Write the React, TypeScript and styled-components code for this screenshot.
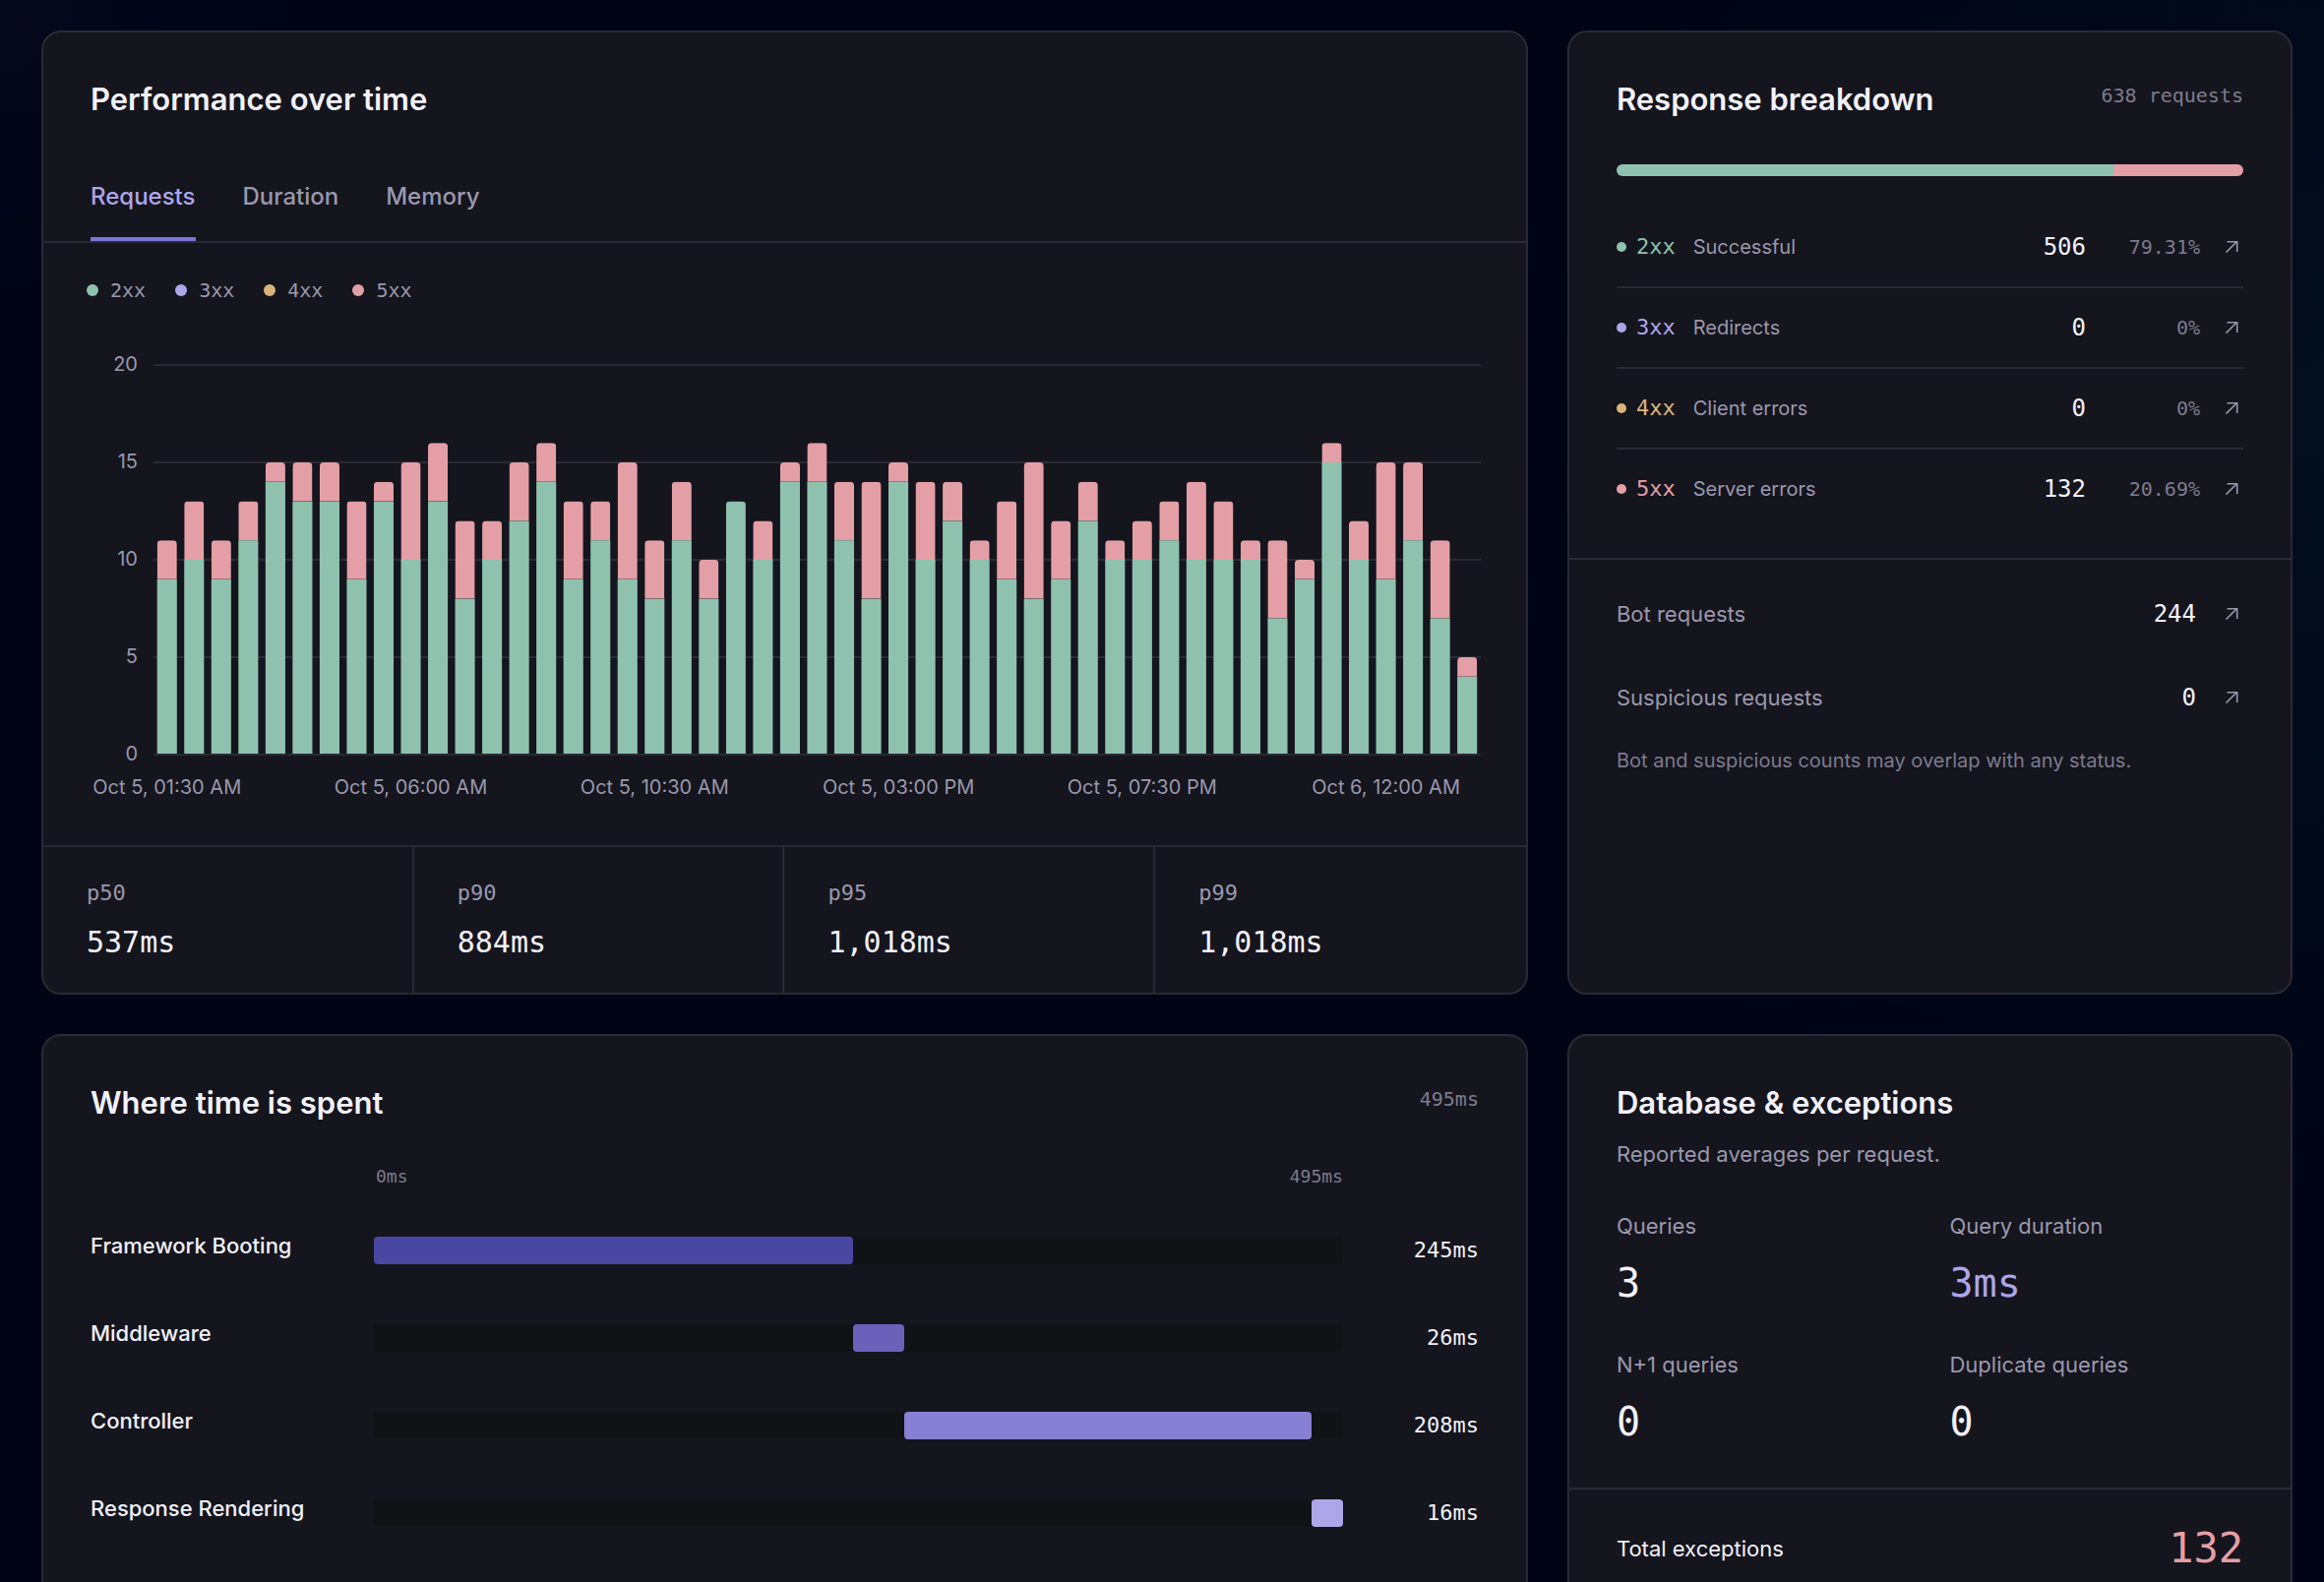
import React, { useState } from "react";
import styled, { createGlobalStyle } from "styled-components";

const color = {
  page: "#000414",
  card: "#15151d",
  line: "#2a2a36",
  track: "#111216",
  text: "#f2f1fb",
  muted: "#9a98ae",
  dim: "#7d7b8f",
  green: "#8fc2ae",
  violet: "#aea6e9",
  amber: "#d9b57c",
  pink: "#e49fa6",
  accent: "#7a75d8",
};

const sans = `Inter, "Liberation Sans", sans-serif`;
const mono = `"DejaVu Sans Mono", "Liberation Mono", monospace`;

const GlobalStyle = createGlobalStyle`
  *, *::before, *::after { box-sizing: border-box; }
  html { background: ${color.page}; }
  body { margin: 0; font-family: ${sans}; color: ${color.text}; -webkit-font-smoothing: antialiased; }
  h2, p, ul, dl, dd { margin: 0; padding: 0; }
  ul { list-style: none; }
`;

const Page = styled.main`
  height: 100vh;
  overflow-y: auto;
  scrollbar-width: none;
  padding: 31px 32px 40px 42px;
  background:
    radial-gradient(circle at 100% 26%, rgba(8, 34, 48, 0.35), transparent 32%),
    radial-gradient(circle at 0 0, rgba(14, 12, 38, 0.4), transparent 12%),
    ${color.page};
`;

const Grid = styled.div`
  display: grid;
  grid-template-columns: minmax(0, 2.05fr) minmax(0, 1fr);
  gap: 40px;
`;

const Card = styled.section`
  display: flex;
  flex-direction: column;
  border: 2px solid ${color.line};
  border-radius: 20px;
  background: ${color.card};
  overflow: hidden;
`;

const CardBody = styled.div<{ $bottom?: number }>`
  padding: 48px 48px ${(p) => p.$bottom ?? 0}px;
`;

const CardHead = styled.header`
  display: flex;
  justify-content: space-between;
  align-items: flex-start;
`;

const Title = styled.h2`
  font-size: 31px;
  line-height: 40px;
  font-weight: 600;
`;

const HeadNote = styled.span`
  font: 20px/32px ${mono};
  color: ${color.dim};
`;

/* Tabs */

const Tabs = styled.div`
  display: flex;
  gap: 48px;
  padding: 60px 48px 0;
  border-bottom: 2px solid ${color.line};
`;

const Tab = styled.button<{ $active: boolean }>`
  padding: 0 0 22px;
  border: 0;
  border-bottom: 4px solid ${(p) => (p.$active ? color.accent : "transparent")};
  background: none;
  font: 500 24px/38px ${sans};
  color: ${(p) => (p.$active ? color.violet : color.muted)};
  cursor: pointer;
`;

/* Chart */

const Dot = styled.span<{ $tone: string; $size: number }>`
  flex: none;
  width: ${(p) => p.$size}px;
  height: ${(p) => p.$size}px;
  border-radius: 50%;
  background: ${(p) => p.$tone};
`;

const Legend = styled.ul`
  display: flex;
  gap: 30px;
  padding: 32px 44px 0;
`;

const LegendItem = styled.li`
  display: flex;
  align-items: center;
  gap: 12px;
  font: 20px/32px ${mono};
  color: ${color.muted};
`;

const ChartArea = styled.div`
  padding: 40px 46px 32px 112px;
`;

const ChartSvg = styled.svg`
  display: block;
  width: 100%;
  height: 476px;
  overflow: visible;
`;

const AxisText = styled.text`
  font: 20px ${sans};
  fill: ${color.muted};
`;

const BarTop = styled.rect`
  clip-path: inset(0 round 4px 4px 0 0) fill-box;
`;

// [2xx, 5xx] for every half hour
const buckets: [number, number][] = [
  [9, 2], [10, 3], [9, 2], [11, 2], [14, 1], [13, 2], [13, 2], [9, 4], [13, 1], [10, 5],
  [13, 3], [8, 4], [10, 2], [12, 3], [14, 2], [9, 4], [11, 2], [9, 6], [8, 3], [11, 3],
  [8, 2], [13, 0], [10, 2], [14, 1], [14, 2], [11, 3], [8, 6], [14, 1], [10, 4], [12, 2],
  [10, 1], [9, 4], [8, 7], [9, 3], [12, 2], [10, 1], [10, 2], [11, 2], [10, 4], [10, 3],
  [10, 1], [7, 4], [9, 1], [15, 1], [10, 2], [9, 6], [11, 4], [7, 4], [4, 1],
];

const ticks = [
  "Oct 5, 01:30 AM",
  "Oct 5, 06:00 AM",
  "Oct 5, 10:30 AM",
  "Oct 5, 03:00 PM",
  "Oct 5, 07:30 PM",
  "Oct 6, 12:00 AM",
];

const TICK_STEP = 9;
const BASE = 416;
const yOf = (v: number) => BASE - (v * 396) / 20;
const slot = 100 / buckets.length;
const barWidth = slot * 0.73;
const pct = (n: number) => `${n}%`;

function RequestsChart() {
  return (
    <ChartSvg role="img" aria-label="Requests by status over time">
      {[5, 10, 15, 20].map((v) => (
        <rect key={v} x="0" width="100%" y={yOf(v) - 1} height="2" fill={color.line} />
      ))}
      {buckets.map(([ok, failed], i) => {
        const x = pct(i * slot + (slot - barWidth) / 2);
        const w = pct(barWidth);
        const Ok = failed ? "rect" : BarTop;
        return (
          <g key={i}>
            <Ok x={x} width={w} y={yOf(ok)} height={BASE - yOf(ok)} fill={color.green} />
            {failed > 0 && (
              <BarTop x={x} width={w} y={yOf(ok + failed)} height={yOf(ok) - yOf(ok + failed)} fill={color.pink} />
            )}
          </g>
        );
      })}
      <rect x="0" width="100%" y={BASE - 1} height="2" fill={color.line} />
      {[0, 5, 10, 15, 20].map((v) => (
        <AxisText key={v} x="-16" y={yOf(v) + 6} textAnchor="end">{v}</AxisText>
      ))}
      {ticks.map((t, i) => (
        <AxisText key={t} x={pct((i * TICK_STEP + 0.5) * slot)} y={BASE + 40} textAnchor="middle">{t}</AxisText>
      ))}
    </ChartSvg>
  );
}

/* Percentiles */

const Percentiles = styled.dl`
  display: grid;
  grid-template-columns: repeat(4, 1fr);
  border-top: 2px solid ${color.line};
`;

const Percentile = styled.div`
  display: grid;
  gap: 14px;
  padding: 31px 44px;
  border-right: 2px solid ${color.line};
  &:last-child { border-right: 0; }
  dt { font: 22px/32px ${mono}; color: ${color.muted}; }
  dd { font: 30px/40px ${mono}; }
`;

/* Response breakdown */

const Split = styled.div`
  display: flex;
  height: 12px;
  margin: 46px 0 32px;
  border-radius: 6px;
  overflow: hidden;
`;

const SplitPart = styled.span<{ $tone: string }>`
  background: ${(p) => p.$tone};
`;

const StatusItem = styled.li`
  border-bottom: 2px solid ${color.line};
  &:last-child { border-bottom: 0; }
`;

const StatusLink = styled.a`
  display: grid;
  grid-template-columns: auto 1fr auto 116px 44px;
  align-items: center;
  height: 80px;
  color: inherit;
  text-decoration: none;
`;

const StatusCode = styled.span<{ $tone: string }>`
  display: flex;
  align-items: center;
  gap: 10px;
  font: 22px/32px ${mono};
  color: ${(p) => p.$tone};
`;

const StatusName = styled.span`
  padding-left: 18px;
  font-size: 20px;
  line-height: 32px;
  color: ${color.muted};
`;

const Count = styled.span`
  font: 24px/32px ${mono};
  text-align: right;
`;

const Share = styled.span`
  font: 20px/32px ${mono};
  color: ${color.dim};
  text-align: right;
`;

const Arrow = styled.svg`
  display: block;
  justify-self: end;
  width: 24px;
  height: 24px;
  fill: none;
  stroke: ${color.muted};
`;

const ArrowIcon = () => (
  <Arrow viewBox="0 0 24 24" aria-hidden="true">
    <path d="M6.5 17.5 17.5 6.5M7.5 6.8h10.2v10.2" strokeWidth="1.6" />
  </Arrow>
);

const Extra = styled.div`
  padding: 12px 48px;
  border-top: 2px solid ${color.line};
`;

const ExtraLink = styled.a`
  display: grid;
  grid-template-columns: 1fr auto 24px;
  align-items: center;
  column-gap: 24px;
  height: 85px;
  color: inherit;
  text-decoration: none;
`;

const Label = styled.span`
  font-size: 22px;
  line-height: 32px;
  color: ${color.muted};
`;

const FootNote = styled.p`
  padding-top: 6px;
  font-size: 20px;
  line-height: 32px;
  color: ${color.dim};
`;

/* Time spent */

const TimeRow = styled.div`
  display: grid;
  grid-template-columns: 260px minmax(0, 1fr) 110px;
  column-gap: 28px;
  align-items: center;
`;

const Scale = styled.div`
  grid-column: 2;
  display: flex;
  justify-content: space-between;
  padding: 43px 0 0 2px;
  font: 18px/24px ${mono};
  color: ${color.dim};
`;

const Phases = styled.ul`
  display: grid;
  gap: 43px;
  padding-top: 40px;
`;

const PhaseRow = styled(TimeRow).attrs({ as: "li" })`
  height: 46px;
`;

const PhaseName = styled.span`
  align-self: start;
  font-size: 22px;
  line-height: 36px;
  font-weight: 500;
`;

const Track = styled.div`
  height: 28px;
  border-radius: 4px;
  background: ${color.track};
`;

const Fill = styled.div<{ $tone: string }>`
  height: 100%;
  border-radius: 4px;
  background: ${(p) => p.$tone};
`;

const PhaseTime = styled.span`
  font: 22px/32px ${mono};
  text-align: right;
`;

/* Database */

const Subtitle = styled.p`
  padding-top: 16px;
  font-size: 22px;
  line-height: 32px;
  color: ${color.muted};
`;

const Stats = styled.dl`
  display: grid;
  grid-template-columns: repeat(2, minmax(0, 1fr));
  gap: 41px 40px;
  padding-top: 41px;
`;

const Stat = styled.div<{ $tone?: string }>`
  display: grid;
  gap: 16px;
  dt { font-size: 22px; line-height: 32px; color: ${color.muted}; }
  dd { font: 40px/52px ${mono}; color: ${(p) => p.$tone ?? color.text}; }
`;

const Total = styled.div`
  display: flex;
  justify-content: space-between;
  align-items: center;
  padding: 32px 48px;
  border-top: 2px solid ${color.line};
  font-size: 22px;
  line-height: 56px;
`;

const TotalValue = styled.span`
  font: 42px/56px ${mono};
  color: ${color.pink};
`;

const statuses = [
  { code: "2xx", name: "Successful", count: 506, share: 79.31, tone: color.green },
  { code: "3xx", name: "Redirects", count: 0, share: 0, tone: color.violet },
  { code: "4xx", name: "Client errors", count: 0, share: 0, tone: color.amber },
  { code: "5xx", name: "Server errors", count: 132, share: 20.69, tone: color.pink },
];

const percentiles = [
  ["p50", "537ms"],
  ["p90", "884ms"],
  ["p95", "1,018ms"],
  ["p99", "1,018ms"],
];

const totalTime = 495;
const phases = [
  { name: "Framework Booting", start: 0, time: 245, tone: "#4947a1" },
  { name: "Middleware", start: 245, time: 26, tone: "#6c60bb" },
  { name: "Controller", start: 271, time: 208, tone: "#8880d4" },
  { name: "Response Rendering", start: 479, time: 16, tone: "#aea6e9" },
];

const stats = [
  { name: "Queries", value: "3" },
  { name: "Query duration", value: "3ms", tone: color.violet },
  { name: "N+1 queries", value: "0" },
  { name: "Duplicate queries", value: "0" },
];

export default function App() {
  const [tab, setTab] = useState("Requests");

  return (
    <Page>
      <GlobalStyle />
      <Grid>
        <Card>
          <CardBody>
            <Title>Performance over time</Title>
          </CardBody>
          <Tabs role="tablist">
            {["Requests", "Duration", "Memory"].map((t) => (
              <Tab key={t} role="tab" aria-selected={t === tab} $active={t === tab} onClick={() => setTab(t)}>
                {t}
              </Tab>
            ))}
          </Tabs>
          <Legend>
            {statuses.map((s) => (
              <LegendItem key={s.code}>
                <Dot $tone={s.tone} $size={12} />
                {s.code}
              </LegendItem>
            ))}
          </Legend>
          <ChartArea>
            <RequestsChart />
          </ChartArea>
          <Percentiles>
            {percentiles.map(([name, value]) => (
              <Percentile key={name}>
                <dt>{name}</dt>
                <dd>{value}</dd>
              </Percentile>
            ))}
          </Percentiles>
        </Card>

        <Card>
          <CardBody $bottom={30}>
            <CardHead>
              <Title>Response breakdown</Title>
              <HeadNote>638 requests</HeadNote>
            </CardHead>
            <Split>
              {statuses.map((s) => (
                <SplitPart key={s.code} $tone={s.tone} style={{ width: pct(s.share) }} />
              ))}
            </Split>
            <ul>
              {statuses.map((s) => (
                <StatusItem key={s.code}>
                  <StatusLink href={`#status-${s.code}`}>
                    <StatusCode $tone={s.tone}>
                      <Dot $tone={s.tone} $size={10} />
                      {s.code}
                    </StatusCode>
                    <StatusName>{s.name}</StatusName>
                    <Count>{s.count}</Count>
                    <Share>{pct(s.share)}</Share>
                    <ArrowIcon />
                  </StatusLink>
                </StatusItem>
              ))}
            </ul>
          </CardBody>
          <Extra>
            <ExtraLink href="#bots">
              <Label>Bot requests</Label>
              <Count>244</Count>
              <ArrowIcon />
            </ExtraLink>
            <ExtraLink href="#suspicious">
              <Label>Suspicious requests</Label>
              <Count>0</Count>
              <ArrowIcon />
            </ExtraLink>
            <FootNote>Bot and suspicious counts may overlap with any status.</FootNote>
          </Extra>
        </Card>

        <Card>
          <CardBody $bottom={48}>
            <CardHead>
              <Title>Where time is spent</Title>
              <HeadNote>495ms</HeadNote>
            </CardHead>
            <TimeRow>
              <Scale>
                <span>0ms</span>
                <span>495ms</span>
              </Scale>
            </TimeRow>
            <Phases>
              {phases.map((p) => (
                <PhaseRow key={p.name}>
                  <PhaseName>{p.name}</PhaseName>
                  <Track>
                    <Fill
                      $tone={p.tone}
                      style={{ marginLeft: pct((p.start / totalTime) * 100), width: pct((p.time / totalTime) * 100) }}
                    />
                  </Track>
                  <PhaseTime>{p.time}ms</PhaseTime>
                </PhaseRow>
              ))}
            </Phases>
          </CardBody>
        </Card>

        <Card>
          <CardBody $bottom={41}>
            <Title>Database &amp; exceptions</Title>
            <Subtitle>Reported averages per request.</Subtitle>
            <Stats>
              {stats.map((s) => (
                <Stat key={s.name} $tone={s.tone}>
                  <dt>{s.name}</dt>
                  <dd>{s.value}</dd>
                </Stat>
              ))}
            </Stats>
          </CardBody>
          <Total>
            <span>Total exceptions</span>
            <TotalValue>132</TotalValue>
          </Total>
        </Card>
      </Grid>
    </Page>
  );
}
